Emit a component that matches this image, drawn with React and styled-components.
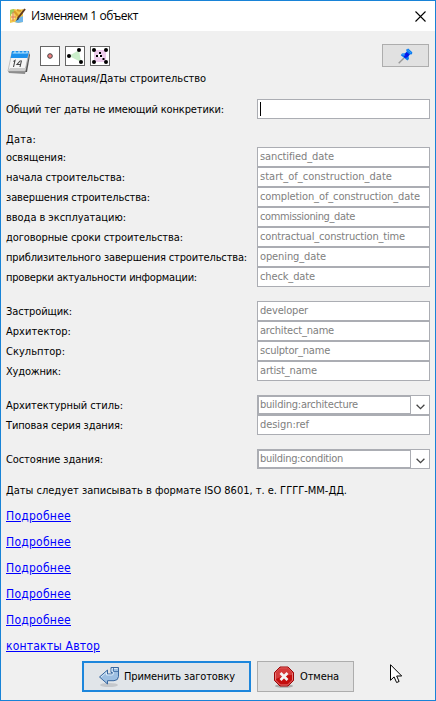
import React, { useLayoutEffect, useRef, useState } from "react";
import styled, { createGlobalStyle } from "styled-components";

const Global = createGlobalStyle`
  * { box-sizing: border-box; }
  body { margin: 0; background: #f0f0f0; }
`;

const Dialog = styled.div`
  width: 436px;
  height: 701px;
  display: flex;
  flex-direction: column;
  border: 1px solid #1883d7;
  background: #f0f0f0;
  color: #000;
  font-family: "DejaVu Sans Condensed", "DejaVu Sans", sans-serif;
  font-stretch: condensed;
  font-size: 11px;
  line-height: 14px;
  overflow: hidden;
`;

const TitleBar = styled.header`
  height: 30px;
  flex: none;
  display: flex;
  align-items: center;
  background: #fff;
  padding: 0 9px 0 8px;
  font-family: "Open Sans", "Noto Sans", sans-serif;
  font-stretch: normal;
  font-size: 12px;
`;

const Title = styled.div`
  flex: 1;
  padding-left: 5px;
`;

const Header = styled.div`
  height: 68px;
  flex: none;
  display: flex;
  align-items: flex-start;
  padding: 13px 6px 0 6px;
`;

const CalendarSlot = styled.div`
  width: 33px;
  padding-top: 5px;
`;

const Summary = styled.div`
  flex: 1;
  padding-top: 2px;
`;

const TypeIcons = styled.div`
  display: flex;
  gap: 5px;
  height: 20px;
  margin-bottom: 6px;
`;

const PinButton = styled.button`
  width: 47px;
  height: 23px;
  padding: 0;
  display: flex;
  align-items: center;
  justify-content: center;
  background: #e1e1e1;
  border: 1px solid #adadad;
`;

const Form = styled.div`
  display: flex;
  flex-direction: column;
  padding: 0 5px;
`;

const Row = styled.div`
  display: grid;
  grid-template-columns: 251px 173px;
  align-items: center;
  height: 20px;
  margin-top: ${(p) => p.$gap || 0}px;
`;

const Label = styled.div`
  padding-top: 2px;
`;

const Heading = styled.div`
  height: 14px;
  margin-top: 14px;
`;

const Field = styled.div`
  display: flex;
  align-items: flex-start;
  height: 20px;
  background: #fff;
  border: 1px solid #abadb3;
  color: #808080;
  padding: 2px 0 0 2px;
`;

const Caret = styled.span`
  width: 1px;
  height: 14px;
  background: #000;
`;

const Combo = styled.div`
  display: flex;
  height: 20px;
  border: 1px solid #abadb3;
  background: #fff;
  color: #808080;
`;

const ComboValue = styled.div`
  width: 153px;
  display: flex;
  align-items: flex-start;
  border: 1px solid #abadb3;
  padding: 1px 0 0 1px;
`;

const ComboArrow = styled.div`
  flex: 1;
  display: flex;
  align-items: center;
  justify-content: center;
  padding-top: 3px;
`;

const Note = styled.p`
  margin: 15px 0 4px;
  height: 15px;
`;

const Links = styled.nav`
  display: flex;
  flex-direction: column;
  align-items: flex-start;
`;

const Link = styled.a`
  height: 26px;
  line-height: 26px;
  font-size: 12px;
  color: #0000ff;
  text-decoration: underline;
  text-underline-offset: 1px;
  text-decoration-thickness: 1px;
`;

const Footer = styled.footer`
  display: flex;
  gap: 6px;
  padding: 2px 0 0 81px;
`;

const Button = styled.button`
  width: ${(p) => p.$width}px;
  height: 31px;
  display: flex;
  align-items: center;
  padding: 0 0 0 ${(p) => (p.$primary ? 14 : 15)}px;
  gap: ${(p) => (p.$primary ? 4 : 5)}px;
  color: #000;
  font: inherit;
  background: ${(p) => (p.$primary ? "#e1e5e9" : "#e1e1e1")};
  border: ${(p) => (p.$primary ? "2px solid #1c86dc" : "1px solid #adadad")};
`;

const Cursor = styled.svg`
  position: absolute;
  left: 390px;
  top: 664px;
`;

const TextRun = styled.span`
  white-space: pre;
`;

/* Keeps a run of text at a fixed advance width by tuning its tracking. */
function Text({ w, children }) {
  const ref = useRef(null);
  const [spacing, setSpacing] = useState(0);
  useLayoutEffect(() => {
    const natural = ref.current.getBoundingClientRect().width;
    setSpacing((w - natural) / children.length);
  }, []);
  return (
    <TextRun ref={ref} style={{ letterSpacing: `${spacing}px` }}>
      {children}
    </TextRun>
  );
}

function AppIcon() {
  return (
    <svg width="17" height="16" viewBox="0 0 17 16">
      <path d="M1 2l4-1 5 1 4-1v13l-5 1-4-1-4 1z" fill="#f2c84b" />
      <path d="M1 2l4-1v5L1 8z" fill="#9bcf5e" />
      <path d="M9 10l5-2v6l-5 1-3-1z" fill="#6fb6ea" />
      <path d="M2 6l3-1 1 6-4 1z" fill="#f7e79b" />
      <path d="M4 4v9M2 9h5" stroke="#e0785c" fill="none" />
      <path d="M5 3l5 6M8 2l4 1" stroke="#d99b2b" strokeWidth="2" fill="none" />
      <path d="M16 1L9 10" stroke="#603a20" strokeWidth="2" />
      <path d="M9 9l-2 4 3-2z" fill="#2b2b2b" />
    </svg>
  );
}

function CloseIcon() {
  return (
    <svg width="11" height="11" viewBox="0 0 11 11">
      <path d="M.5.5l10 10M10.5.5l-10 10" stroke="#000" strokeWidth="1.1" />
    </svg>
  );
}

function CalendarIcon() {
  return (
    <svg width="24" height="26" viewBox="0 0 24 26">
      <path d="M4 23h16l3-17-1-2z" fill="#555" />
      <path d="M1 22l1 2 16 1 4-18-1-2z" fill="#8d8d8d" />
      <path d="M5 3h17l-4 19H1z" fill="#f5f5f5" stroke="#aaa" strokeWidth=".7" />
      <path d="M5 2h17l-1.5 7H3.600z" fill="#1d91ec" />
      <path d="M6 3h15l-.5 2H5.500z" fill="#67bcf7" />
      <path d="M8 1v3M12 1v3M16 1v3M20 1v3" stroke="#d8eefb" />
      <path d="M3 19h16l-1 3H1z" fill="#ccc" />
      <path d="M6.500 12.500l1.500-1-1.500 6.500M13.500 11.500l-3.500 4h4M14.500 11.500l-1.500 6.500" stroke="#444" strokeWidth="1.100" fill="none" />
    </svg>
  );
}

function Frame({ children }) {
  return (
    <svg width="20" height="20" viewBox="0 0 20 20">
      <rect x=".5" y=".5" width="19" height="19" fill="#fff" stroke="#666" />
      {children}
    </svg>
  );
}

function Dots({ at }) {
  return at.map(([x, y]) => <circle key={`${x}-${y}`} cx={x} cy={y} r="2" fill="#000" />);
}

function PinIcon() {
  return (
    <svg width="15" height="16" viewBox="0 0 15 16">
      <path d="M.7 15.300L6 10" stroke="#999" strokeWidth="1.400" />
      <path d="M8 1.800L10.200.6 14.300 4.200 14 6.300 11.700 6.400 10.600 8.200 11 11 9.400 12.500 2.800 7.300 4 5.400 7.200 5.200 8.800 3.500z" fill="#0b7df2" />
      <path d="M8.500 4l3.300 2.500L9 9.600 6.500 10 5.800 7.500z" fill="#0618e8" />
      <path d="M9.300 1.800l3.500 3M4.100 6.200l3 1" stroke="#41a1fa" />
    </svg>
  );
}

function ArrowDown() {
  return (
    <svg width="9" height="6" viewBox="0 0 9 6">
      <path d="M.6 .7l3.900 3.900L8.400 .7" stroke="#444" strokeWidth="1.300" fill="none" />
    </svg>
  );
}

function ApplyIcon() {
  return (
    <svg width="22" height="22" viewBox="0 0 22 22">
      <ellipse cx="11" cy="19" rx="9" ry="2" fill="#c5c8cc" />
      <path
        d="M1.500 11L9.500 4v4h3.800q1-.2 1-1.500H13V1.500h7.500v9q-.3 4-4.500 4.200H9.500V18z"
        fill="#9dbfe2"
        stroke="#38679f"
        strokeLinejoin="round"
      />
      <path d="M3 11l5.500-4.800V9h6q1.200-.6 1.200-3.500H14V2.500h5.500" fill="none" stroke="#d9e9f7" />
      <path d="M15.500 2v3.500h5" fill="none" stroke="#38679f" strokeWidth=".8" />
    </svg>
  );
}

function CancelIcon() {
  return (
    <svg width="22" height="22" viewBox="0 0 22 22">
      <ellipse cx="11" cy="20" rx="9" ry="1.700" fill="#aaa" />
      <path d="M7 1h8l5.500 5.500v8L15 20H7l-5.500-5.500v-8z" fill="#c40d0d" stroke="#9c0505" />
      <path d="M7.400 2h7.200l4.900 4.900v7.200L14.600 19H7.400l-4.900-4.900V6.900z" fill="none" stroke="#e67b7b" />
      <path d="M3 7l4.600-4.500h6.800L19 7v2Q11 9 3 13z" fill="#de5555" opacity=".65" />
      <path d="M7.500 7l7 7M14.500 7l-7 7" stroke="#f4f4f4" strokeWidth="2.700" />
    </svg>
  );
}

const dates = [
  ["освящения:", 60, "sanctified_date", 74],
  ["начала строительства:", 119, "start_of_construction_date", 132],
  ["завершения строительства:", 144, "completion_of_construction_date", 160],
  ["ввода в эксплуатацию:", 120, "commissioning_date", 95],
  ["договорные сроки строительства:", 177, "contractual_construction_time", 145],
  ["приблизительного завершения строительства:", 241, "opening_date", 66],
  ["проверки актуальности информации:", 191, "check_date", 55],
];

const people = [
  ["Застройщик:", 66, "developer", 48],
  ["Архитектор:", 65, "architect_name", 74],
  ["Скульптор:", 59, "sculptor_name", 70],
  ["Художник:", 55, "artist_name", 57],
];

function FieldRow({ data: [label, labelWidth, value, valueWidth], gap }) {
  return (
    <Row $gap={gap}>
      <Label><Text w={labelWidth}>{label}</Text></Label>
      <Field><Text w={valueWidth}>{value}</Text></Field>
    </Row>
  );
}

function ComboRow({ data: [label, labelWidth, value, valueWidth], gap }) {
  return (
    <Row $gap={gap}>
      <Label><Text w={labelWidth}>{label}</Text></Label>
      <Combo>
        <ComboValue><Text w={valueWidth}>{value}</Text></ComboValue>
        <ComboArrow><ArrowDown /></ComboArrow>
      </Combo>
    </Row>
  );
}

export default function App() {
  return (
    <Dialog>
      <Global />
      <TitleBar>
        <AppIcon />
        <Title><Text w={107}>Изменяем 1 объект</Text></Title>
        <CloseIcon />
      </TitleBar>
      <Header>
        <CalendarSlot><CalendarIcon /></CalendarSlot>
        <Summary>
          <TypeIcons>
            <Frame><circle cx="10" cy="10" r="2.300" fill="#f08080" stroke="#444" /></Frame>
            <Frame>
              <path d="M4 10L14 4l2 12z" fill="#caeeca" />
              <Dots at={[[4, 10], [14, 4], [16, 16]]} />
            </Frame>
            <Frame>
              <path d="M4 4h12v12H4z" fill="#edccec" />
              <path d="M7 10l3-3 3.500 6z" fill="#fff" />
              <Dots at={[[4, 4], [16, 4], [4, 16], [16, 16]]} />
              <path d="M6 9h2v2H6zM9 6h2v2H9zM12.500 12h2v2h-2zM10 9h2v2h-2z" fill="#000" />
            </Frame>
          </TypeIcons>
          <Text w={166}>Аннотация/Даты строительство</Text>
        </Summary>
        <PinButton aria-label="pin"><PinIcon /></PinButton>
      </Header>
      <Form>
        <Row>
          <Label><Text w={218}>Общий тег даты не имеющий конкретики:</Text></Label>
          <Field><Caret /></Field>
        </Row>
        <Heading><Text w={30}>Дата:</Text></Heading>
        {dates.map((d) => <FieldRow key={d[2]} data={d} />)}
        {people.map((d, i) => <FieldRow key={d[2]} data={d} gap={i === 0 ? 14 : 0} />)}
        <ComboRow gap={14} data={["Архитектурный стиль:", 117, "building:architecture", 98]} />
        <FieldRow data={["Типовая серия здания:", 117, "design:ref", 49]} />
        <ComboRow gap={14} data={["Состояние здания:", 97, "building:condition", 83]} />
        <Note><Text w={341}>Даты следует записывать в формате ISO 8601, т. е. ГГГГ-ММ-ДД.</Text></Note>
        <Links>
          {[1, 2, 3, 4, 5].map((n) => (
            <Link key={n}><Text w={65}>Подробнее</Text></Link>
          ))}
          <Link><Text w={94}>контакты Автор</Text></Link>
        </Links>
      </Form>
      <Footer>
        <Button $primary $width={169}><ApplyIcon /><Text w={111}>Применить заготовку</Text></Button>
        <Button $width={97}><CancelIcon /><Text w={39}>Отмена</Text></Button>
      </Footer>
      <Cursor width="13" height="20" viewBox="0 0 13 20">
        <path d="M.5.7v15.600l3.600-3.400 2.500 5.600 2.500-1-2.400-5.500h5z" fill="#fff" stroke="#000" />
      </Cursor>
    </Dialog>
  );
}
